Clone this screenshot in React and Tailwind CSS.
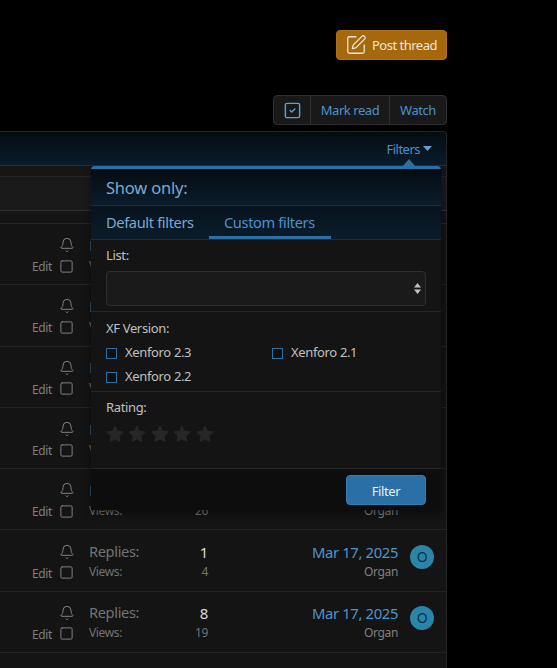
import React from "react";
import { Bell, Square, SquarePen, SquareCheck } from "lucide-react";

const rows = [
  ["12", "40", "Mar 18, 2025"],
  ["3", "31", "Mar 18, 2025"],
  ["5", "22", "Mar 18, 2025"],
  ["2", "18", "Mar 17, 2025"],
  ["4", "26", "Mar 17, 2025"],
  ["1", "4", "Mar 17, 2025"],
  ["8", "19", "Mar 17, 2025"],
];

function Row({ replies, views, date }) {
  return (
    <div className="h-[61.3px] shrink-0 border-b border-[#222222] flex justify-end items-center pr-[12px]">
      <div className="w-[40px] mr-[16px] mt-[3px] flex flex-col items-end gap-[5px]">
        <Bell size={16} strokeWidth={1.5} className="text-[#808080] -mr-[2px]" />
        <div className="flex items-center gap-[7px] -ml-[30px] -mr-[1px] whitespace-nowrap">
          <span className="text-[12px] leading-[14px] pt-[2px] text-[#7f7f7f]">Edit</span>
          <Square size={15} strokeWidth={1.6} className="text-[#808080]" />
        </div>
      </div>
      <div className="w-[119px] mt-[1px] flex flex-col gap-[2px]">
        <div className="flex justify-between items-center h-[20px]">
          <span className="text-[14.6px] text-[#737373]">Replies:</span>
          <span className="text-[15px] text-[#dcdcdc]">{replies}</span>
        </div>
        <div className="flex justify-between items-center h-[16px]">
          <span className="text-[12px] text-[#737373]">Views:</span>
          <span className="text-[12px] text-[#737373]">{views}</span>
        </div>
      </div>
      <div className="w-[190px] mt-[1px] flex flex-col items-end gap-[2px]">
        <span className="text-[14.8px] leading-[20px] text-[#4f95cc]">{date}</span>
        <span className="text-[12px] leading-[16px] text-[#808080]">Organ</span>
      </div>
      <div className="w-[24px] h-[24px] ml-[12px] -mt-[8px] rounded-full bg-[#2a86a8] text-[#0d2f40] text-[14px] flex items-center justify-center">
        O
      </div>
    </div>
  );
}

function Check({ label }) {
  return (
    <label className="flex items-center h-[24px] gap-[8px] text-[13px] text-[#c0c0c0]">
      <span className="w-[11px] h-[11px] border border-[#2a6fa5] bg-[#0f0f0f] shrink-0" />
      {label}
    </label>
  );
}

function Star() {
  return (
    <svg width="20" height="20" viewBox="0 0 20 20" className="text-[#272727]">
      <path
        fill="currentColor"
        stroke="currentColor"
        strokeWidth="1.5"
        strokeLinejoin="round"
        d="M10 2.5l2.3 4.9 5.2.7-3.8 3.6.9 5.3L10 14.5 5.4 17l.9-5.3-3.8-3.6 5.2-.7z"
      />
    </svg>
  );
}

export default function App() {
  return (
    <div className="h-[668px] w-[557px] overflow-hidden bg-black font-['Noto_Sans',sans-serif] tracking-[-0.35px]">
      <div className="w-[447px] pt-[30px] flex flex-col items-end">
        <button className="w-[111px] h-[30px] rounded-[4px] bg-[#a5680d] border border-[#b07314] flex items-center pl-[8px] gap-[5px] text-[13px] tracking-[-0.5px] text-[#f0e6d6]">
          <SquarePen size={22} strokeWidth={1.4} className="-mt-[1px]" />
          <span className="pt-[2px]">Post thread</span>
        </button>

        <div className="mt-[35px] h-[30px] flex rounded-[4px] border border-[#303030] bg-[#191919] text-[13px] tracking-[-0.45px] text-[#4c92c9]">
          <div className="w-[36px] flex items-center justify-center text-[#5ba0d8]">
            <SquareCheck size={19} strokeWidth={1.8} />
          </div>
          <div className="w-[79px] pt-[2px] flex items-center justify-center border-l border-[#303030]">Mark read</div>
          <div className="w-[57px] pt-[2px] flex items-center justify-center border-l border-[#303030]">Watch</div>
        </div>

        <div className="relative mt-[6px] w-full h-[600px] flex flex-col bg-[#141414] border-r border-[#262626] rounded-tr-[4px]">
          <div className="h-[35px] shrink-0 border-t border-[#1c2730] border-b border-b-[#2a2f33] bg-gradient-to-b from-[#050c12] to-[#0a1c2b] rounded-tr-[4px] flex items-center justify-end pr-[14px] text-[13px] tracking-[-0.5px] text-[#4c92c9]">
            <span className="pt-[2px]">Filters</span>
            <svg width="9" height="5" viewBox="0 0 9 5" className="ml-[3px] text-[#5ba0d8]">
              <path fill="currentColor" d="M0 0h9L4.5 5z" />
            </svg>
          </div>
          <div className="h-[11px] shrink-0 border-b border-[#262626] bg-[#161616]" />
          <div className="h-[34px] shrink-0 border-b border-[#303030] bg-[#1a1a1a]" />
          <div className="h-[13px] shrink-0 border-b border-[#262626] bg-[#141414]" />
          {rows.map((r, i) => (
            <Row key={i} replies={r[0]} views={r[1]} date={r[2]} />
          ))}
          <div className="flex-1" />

          <div className="absolute left-[91px] top-[35px] w-[350px] h-[344px] flex flex-col border-t-[3px] border-[#2a6fa5] rounded-t-[4px] bg-[#141414] shadow-[0_3px_8px_rgba(0,0,0,0.45)]">
            <svg width="20" height="10" viewBox="0 0 20 10" className="absolute right-[22px] -top-[12px] text-[#2a6fa5]">
              <path fill="currentColor" d="M3 10L10 2l7 8z" />
            </svg>
            <div className="h-[37px] shrink-0 pt-[2px] px-[15px] flex items-center border-b border-[#262b2f] bg-gradient-to-b from-[#050c12] to-[#0a1c2b] text-[16.5px] tracking-[-0.2px] text-[#7ba9cf]">
              Show only:
            </div>
            <div className="h-[34px] shrink-0 flex items-stretch pl-[15px] border-b border-[#262b2f] bg-gradient-to-b from-[#07131d] to-[#0a1c2b] text-[14.6px]">
              <div className="w-[88px] whitespace-nowrap flex items-center text-[#7ba9cf]">Default filters</div>
              <div className="ml-[15px] w-[122px] pl-[15px] pt-[3px] whitespace-nowrap flex items-center border-b-[3px] border-[#2a6fa5] text-[#4c92c9]">Custom filters</div>
            </div>
            <div className="h-[72px] shrink-0 px-[15px] pt-[6px] border-b border-[#262626]">
              <div className="text-[13px] leading-[18px] text-[#c0c0c0]">List:</div>
              <div className="mt-[7px] h-[35px] rounded-[4px] border border-[#303030] bg-[#1a1a1a] flex items-center justify-end pr-[4px]">
                <svg width="7" height="11" viewBox="0 0 7 11" className="text-[#c0c0c0]">
                  <path fill="currentColor" d="M3.5 0L7 4.5H0zM0 6.5h7L3.5 11z" />
                </svg>
              </div>
            </div>
            <div className="h-[80px] shrink-0 px-[15px] pt-[7px] border-b border-[#262626]">
              <div className="text-[13px] leading-[18px] text-[#c0c0c0]">XF Version:</div>
              <div className="mt-[4px] grid grid-cols-2 w-[332px]">
                <Check label="Xenforo 2.3" />
                <Check label="Xenforo 2.1" />
                <Check label="Xenforo 2.2" />
              </div>
            </div>
            <div className="h-[77px] shrink-0 px-[15px] pt-[6px] border-b border-[#262626]">
              <div className="text-[13px] leading-[18px] text-[#c0c0c0]">Rating:</div>
              <div className="mt-[8px] flex gap-[2.4px] -ml-[1px]">
                <Star /><Star /><Star /><Star /><Star />
              </div>
            </div>
            <div className="flex-1 bg-[#0d0d0d] flex justify-end pr-[15px] pt-[6px]">
              <button className="w-[80px] h-[30px] pt-[3px] rounded-[4px] bg-[#2a6fa5] border border-[#347cb4] text-[13px] text-[#e8eef3]">
                Filter
              </button>
            </div>
          </div>
        </div>
      </div>
    </div>
  );
}
